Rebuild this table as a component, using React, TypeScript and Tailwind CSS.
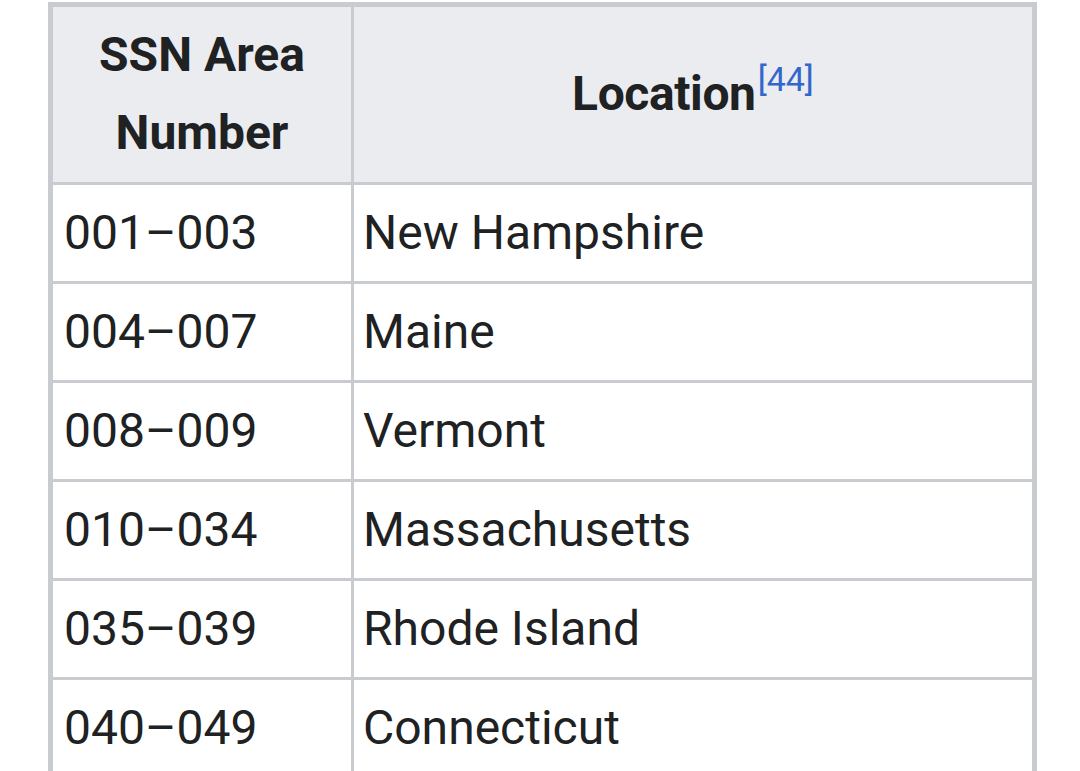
import React from "react";

const rows: [string, string][] = [
  ["001–003", "New Hampshire"],
  ["004–007", "Maine"],
  ["008–009", "Vermont"],
  ["010–034", "Massachusetts"],
  ["035–039", "Rhode Island"],
  ["040–049", "Connecticut"],
];

export default function App() {
  return (
    <div className="min-h-screen bg-white pl-[48px] pt-[2px] font-['Roboto',sans-serif] text-[#202122]">
      <div className="w-[989px] border-x-[5px] border-t-[5px] border-[#c8ccd1]">
        <div className="flex h-[178px] border-b-[3px] border-[#c8ccd1] bg-[#eaecf0]">
          <div className="flex w-[301px] items-center justify-center border-r-[3px] border-[#c8ccd1] pb-[2px] text-center text-[48px] font-bold leading-[78px]">
            <span>
              SSN Area
              <br />
              Number
            </span>
          </div>
          <div className="flex flex-1 items-center justify-center pb-[2px] text-[48px] font-bold leading-[78px] tracking-[-0.4px]">
            <span>
              Location
              <span className="ml-[2px] align-[19px] text-[34px] font-normal leading-none tracking-normal text-[#3366cc]">[44]</span>
            </span>
          </div>
        </div>
        {rows.map(([a, b]) => (
          <div key={a} className="flex h-[99px] border-b-[3px] border-[#c8ccd1] text-[48px] leading-[78px]">
            <div className="flex w-[301px] items-center border-r-[3px] border-[#c8ccd1] pl-[11px]">{a}</div>
            <div className="flex flex-1 items-center pl-[9px]">{b}</div>
          </div>
        ))}
      </div>
    </div>
  );
}
